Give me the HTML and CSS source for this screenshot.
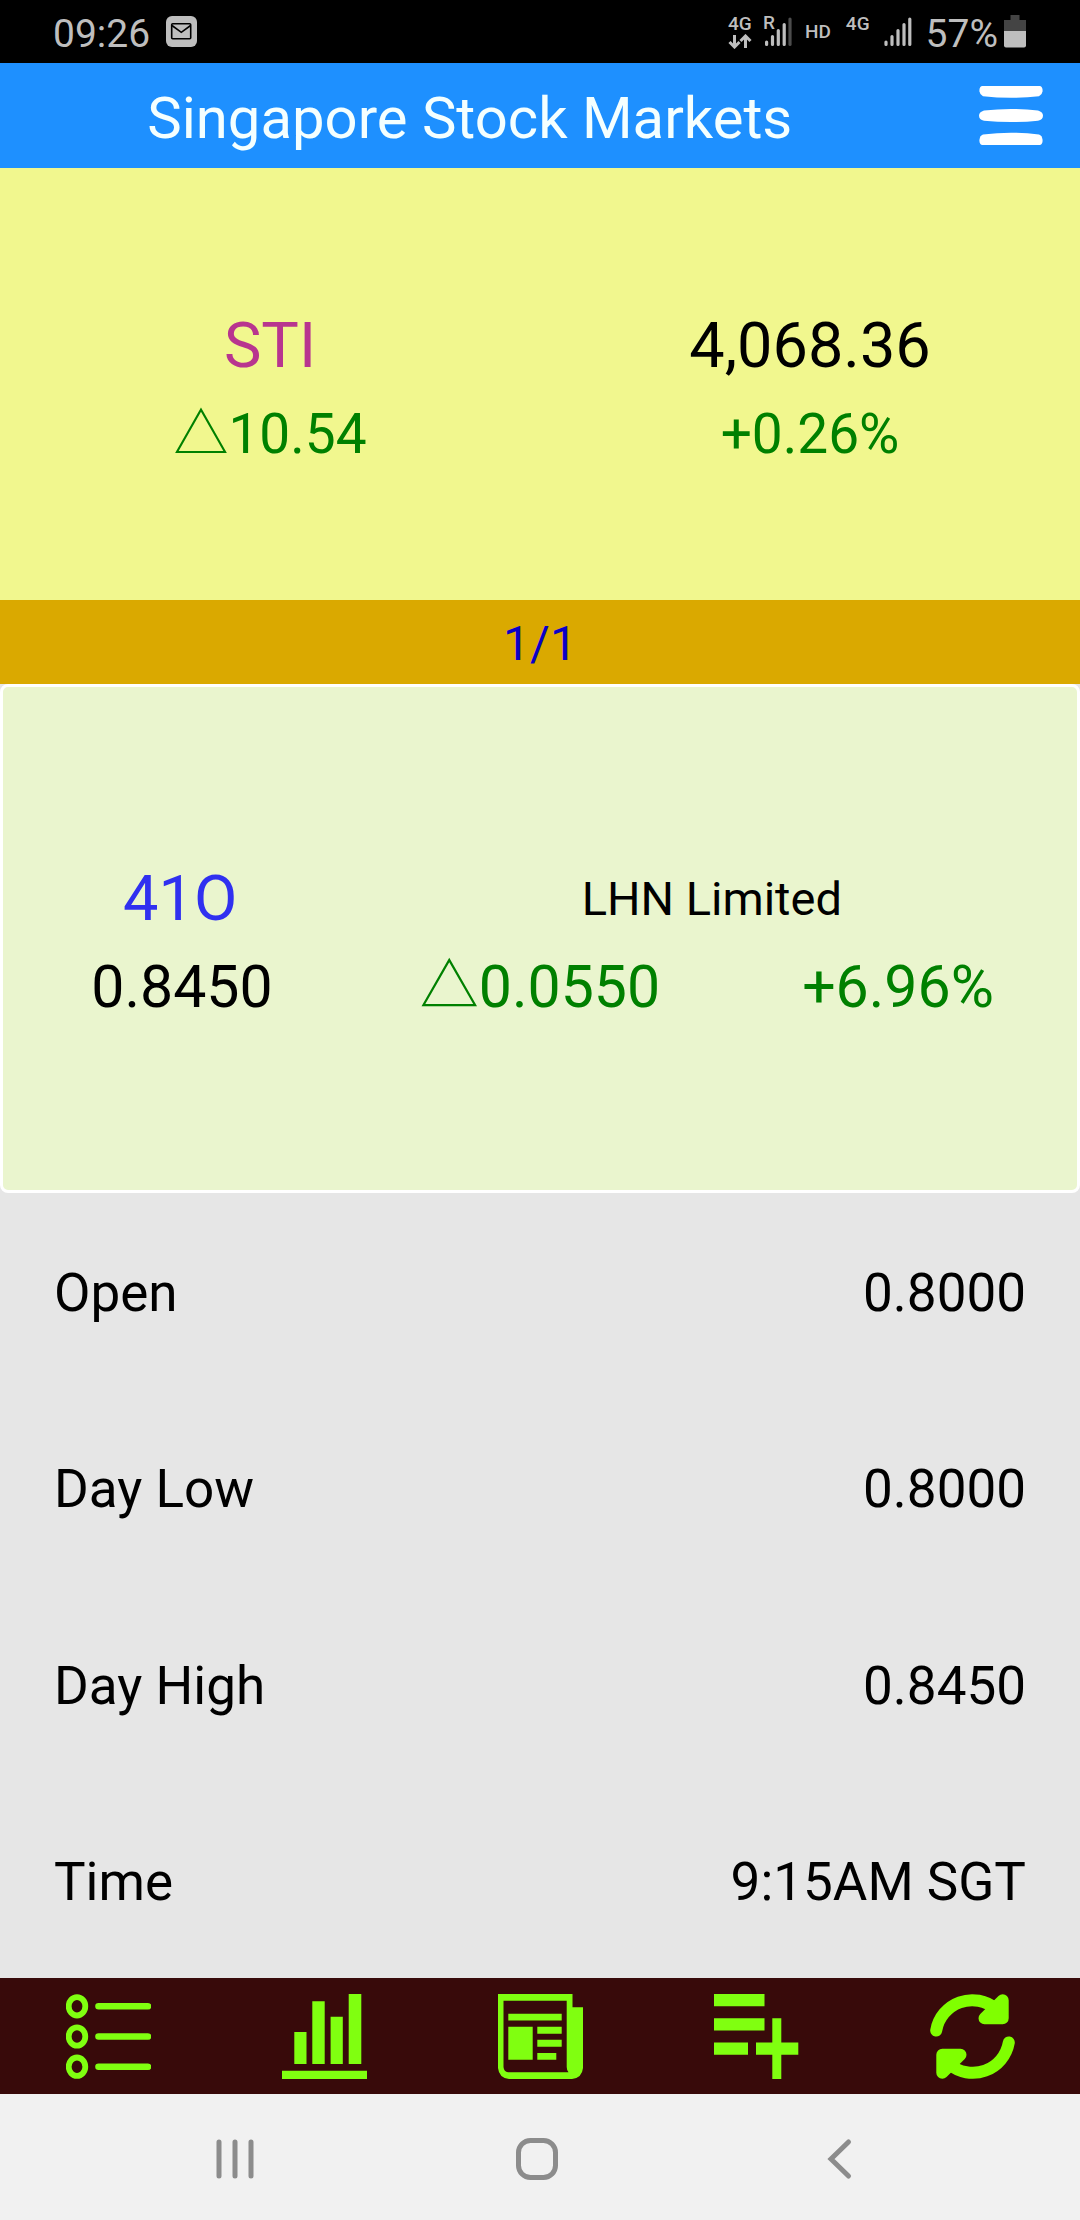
FILE: index.html
```
<!DOCTYPE html>
<html lang="en">
<head>
  <meta charset="UTF-8" />
  <meta name="viewport" content="width=device-width, initial-scale=1.0"/>
  <title>Singapore Stock Markets</title>
  <link rel="stylesheet" href="styles.css">
</head>
<body>

<div class="status">
  <span class="clock">09:26</span>
  <svg class="mail" width="31" height="31" viewBox="0 0 31 31">
    <rect width="31" height="31" rx="6" fill="#bebebe"/>
    <rect x="5.7" y="7.7" width="19" height="15" rx="1" fill="none" stroke="#000" stroke-width="1.6"/>
    <path d="M6 9.5l9.3 6.8 9.3-6.8" fill="none" stroke="#000" stroke-width="1.6"/>
  </svg>
  <div class="signals">
    <div class="net">
      <span class="tiny">4G</span>
      <svg width="24" height="15" viewBox="0 0 24 15" fill="none" stroke="#bebebe" stroke-width="3">
        <path d="M6.500 1v11M1.500 8l5 5 5-5M17.500 14V3M12.500 7l5-5 5 5"/>
      </svg>
    </div>
    <div class="roam">
      <span class="tiny badge">R</span>
      <svg width="28" height="30" viewBox="0 0 28 30" stroke="#bebebe" stroke-width="3.200" stroke-linecap="round">
        <path d="M2.600 25v2.500M8.500 19.500v8M14.300 13.500v14M20.200 7.500v20"/>
        <path d="M26 2v25.500" stroke="#4c4c4c"/>
      </svg>
    </div>
    <span class="tiny hd">HD</span>
    <span class="tiny top">4G</span>
    <svg class="bars" width="28" height="30" viewBox="0 0 28 30" stroke="#bebebe" stroke-width="3.200" stroke-linecap="round">
      <path d="M2 25v2.500M8 19.500v8M14 13.500v14M20 7.500v20M25.800 2v25.500"/>
    </svg>
    <span class="percent">57%</span>
    <svg class="battery" width="22" height="33" viewBox="0 0 22 33">
      <path d="M6.500 0h9v5H22v11H0V5h6.500z" fill="#444"/>
      <path d="M0 16h22v14.500a2 2 0 0 1-2 2H2a2 2 0 0 1-2-2z" fill="#bebebe"/>
    </svg>
  </div>
</div>

<header>
  <h1>Singapore Stock Markets</h1>
  <button class="menu" aria-label="Menu">
    <svg width="64" height="60" viewBox="0 0 64 60" fill="#fff">
      <path d="M3 0H61Q64 1 63.500 5.500Q63 9 60 10.200Q32 13.500 4 10.200Q1 9 .500 5.500Q0 1 3 0Z"/>
      <path d="M5 24.500Q32 21.500 59 24.500Q64 26 64 29.700Q64 33.500 59 34.700Q32 37.500 5 34.700Q0 33.500 0 29.700Q0 26 5 24.500Z"/>
      <path d="M4 48.500Q32 45 60 48.500Q63 49.500 63.500 53.500Q64 58 61 59H3Q0 58 .500 53.500Q1 49.500 4 48.500Z"/>
    </svg>
  </button>
</header>

<section class="index">
  <span class="sti">STI</span>
  <span class="big">4,068.36</span>
  <span class="up">△10.54</span>
  <span class="up">+0.26%</span>
</section>

<div class="pager">1/1</div>

<section class="stock">
  <div class="row name">
    <span class="code">41O</span>
    <span class="company">LHN Limited</span>
  </div>
  <div class="row price">
    <span>0.8450</span>
    <span class="up">△0.0550</span>
    <span class="up">+6.96%</span>
  </div>
</section>

<dl class="details">
  <div><dt>Open</dt><dd>0.8000</dd></div>
  <div><dt>Day Low</dt><dd>0.8000</dd></div>
  <div><dt>Day High</dt><dd>0.8450</dd></div>
  <div><dt>Time</dt><dd>9:15AM SGT</dd></div>
</dl>

<nav class="toolbar">
  <button aria-label="List">
    <svg viewBox="0 0 85 85" fill="none" stroke="#80ff10">
      <g stroke-width="5.800">
        <ellipse cx="11" cy="12.300" rx="8.300" ry="9.200"/>
        <ellipse cx="11" cy="42.500" rx="8.300" ry="9.200"/>
        <ellipse cx="11" cy="72.700" rx="8.300" ry="9.200"/>
      </g>
      <path d="M32.500 12.300H82M32.500 42.500H82M32.500 72.700H82" stroke-width="6.600" stroke-linecap="round"/>
    </svg>
  </button>
  <button aria-label="Chart">
    <svg viewBox="0 0 85 85" fill="#80ff10">
      <path d="M0 76.700h85V85H0zM12.300 38h12.200v32H12.300zM30.300 7.300h12.400V70H30.300zM48.600 22.700h12.200V70H48.600zM66.700 0h12.600v70H66.700z"/>
    </svg>
  </button>
  <button aria-label="News">
    <svg viewBox="0 0 85 85" fill="#80ff10">
      <path fill-rule="evenodd" d="M0 0H74.500V13.300H85V74Q84 84 74 85H11Q1 84 0 74ZM5.500 6.700V73Q6 78 10 78.300H70.500Q68.700 76 68.700 73V6.700Z"/>
      <path d="M10.300 19.700h53.400v6.700H10.300zM10.300 32.700h24.400v33H10.300zM39.300 32.700h24.400v7H39.300zM39.300 45.700h24.400v7H39.300zM39.300 59h19v6.700h-19z"/>
    </svg>
  </button>
  <button aria-label="Add">
    <svg viewBox="0 0 85 85" fill="#80ff10">
      <path d="M0 0h50.500v12.300H0zM0 24.200h50.500v12.300H0zM0 48.400h34v12.300H0zM42 48.400h16.300V24.200h9v24.200h17v12.300h-17V85h-9V60.700H42z"/>
    </svg>
  </button>
  <button aria-label="Refresh">
    <svg viewBox="0 0 85 85" fill="#80ff00" stroke="#80ff00" stroke-width="12" stroke-linecap="round" stroke-linejoin="round">
      <path d="M6.200 36.500A36.500 36.500 0 0 1 66 15" fill="none"/>
      <path d="M72.700 6.200v18.100H54.500z"/>
      <path d="M78.800 48.500A36.500 36.500 0 0 1 19 70" fill="none"/>
      <path d="M12.300 78.800V60.700H30.500z"/>
    </svg>
  </button>
</nav>

<nav class="system">
  <button aria-label="Recent apps">
    <svg width="44" height="44" viewBox="0 0 44 44" stroke="#8c8c8c" stroke-width="5" stroke-linecap="round">
      <path d="M6 5v34M22 5v34M38 5v34"/>
    </svg>
  </button>
  <button aria-label="Home">
    <svg width="44" height="44" viewBox="0 0 44 44" fill="none" stroke="#8c8c8c" stroke-width="5">
      <rect x="3.500" y="3.500" width="37" height="37" rx="12"/>
    </svg>
  </button>
  <button aria-label="Back">
    <svg width="44" height="44" viewBox="0 0 44 44" fill="none" stroke="#8c8c8c" stroke-width="5" stroke-linecap="round">
      <path d="M31.500 5L14 22l17.500 17"/>
    </svg>
  </button>
</nav>

</body>
</html>
```
FILE: styles.css
```
* { box-sizing: border-box; }
body {
  font-family: Roboto, "Noto Sans CJK JP", sans-serif;
  background-color: #e6e6e6;
  color: #000;
  margin: 0;
  min-height: 100vh;
  display: flex;
  flex-direction: column;
}
button { background: none; border: none; padding: 0; margin: 0; cursor: pointer; }
svg { display: block; }

/* phone status bar */
.status { display: flex; align-items: center; height: 63px; padding: 0 54px 0 53px; background-color: #000; color: #bebebe; }
.clock, .percent { font-size: 39px; line-height: 44px; padding-top: 4px; }
.mail { margin-left: 16px; }
.signals { display: flex; align-items: center; margin-left: auto; }
.tiny { font-size: 19px; line-height: 18px; font-weight: 500; }
.net { width: 24px; }
.roam { position: relative; margin-left: 12px; }
.badge { position: absolute; left: -1px; top: -3px; }
.hd { margin-left: 13px; }
.top { margin: 0 14px 16px 15px; }
.bars { margin-right: 14px; }
.battery { margin-left: 6px; }

header { display: flex; align-items: center; height: 105px; background-color: #1e90ff; }
h1 { flex: 1; margin: 0; padding-top: 4px; font-size: 58px; line-height: 68px; font-weight: 400; text-align: center; color: #f4ffff; }
.menu { width: 13%; padding-right: 37px; display: flex; justify-content: flex-end; }

.index { display: grid; grid-template-columns: 1fr 1fr; padding: 134px 0 122px; background-color: #f1f78e; text-align: center; font-size: 55px; line-height: 88px; }
.sti, .big, .code { font-size: 63px; }
.sti { color: #b8358f; }
.up { color: #008000; }

.pager { background-color: #daa900; color: #0a00c8; font-size: 48px; line-height: 84px; padding-top: 2px; height: 84px; text-align: center; }

.stock { border: 3px solid #fff; border-radius: 8px; background-color: #eaf5ce; padding: 168px 0 159px; }
.row { display: grid; text-align: center; line-height: 88px; }
.name { grid-template-columns: 33% 66%; font-size: 47px; }
.price { grid-template-columns: repeat(3, 1fr); font-size: 59px; }
.code { color: #3030f0; }

.details { flex: 1; display: flex; flex-direction: column; margin: 0; font-size: 53px; line-height: 64px; }
.details div { flex: 1; display: flex; align-items: center; justify-content: space-between; padding: 4px 5% 0; }
dd { margin: 0; }

.toolbar { display: flex; height: 116px; background-color: #380a0a; }
.toolbar button { flex: 1; display: flex; align-items: center; justify-content: center; }
.toolbar svg { width: 85px; height: 85px; }

.system { display: flex; height: 126px; padding: 4px 90px 0 84px; background-color: #f1f1f1; }
.system button { flex: 1; display: flex; align-items: center; justify-content: center; }
```
